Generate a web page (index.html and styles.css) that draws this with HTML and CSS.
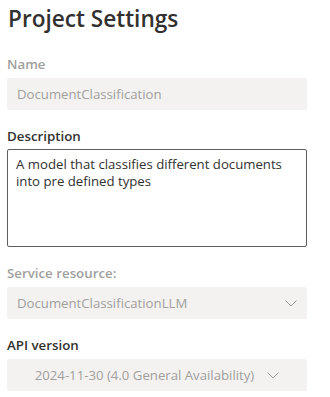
FILE: index.html
```html
<!DOCTYPE html>
<html lang="en">
<head>
<meta charset="utf-8">
<title>Project Settings</title>
<link rel="stylesheet" href="styles.css">
</head>
<body>
<div class="panel">
  <h1 class="title">Project Settings</h1>

  <div class="field">
    <label class="label disabled">Name</label>
    <div class="input disabled-box">DocumentClassification</div>
  </div>

  <div class="field">
    <label class="label label-tight">Description</label>
    <div class="textarea">A model that classifies different documents into pre defined types</div>
  </div>

  <div class="field">
    <label class="label disabled">Service resource:</label>
    <div class="dropdown disabled-box">
      <span class="dropdown-text">DocumentClassificationLLM</span>
      <svg class="chevron" width="12" height="7" viewBox="0 0 12 7"><polyline points="0.5,0.5 6,6 11.5,0.5" fill="none" stroke="#a19f9d" stroke-width="1"/></svg>
    </div>
  </div>

  <div class="field">
    <label class="label">API version</label>
    <div class="dropdown dropdown-center disabled-box">
      <span class="dropdown-text">2024-11-30 (4.0 General Availability)</span>
      <svg class="chevron" width="12" height="7" viewBox="0 0 12 7"><polyline points="0.5,0.5 6,6 11.5,0.5" fill="none" stroke="#a19f9d" stroke-width="1"/></svg>
    </div>
  </div>
</div>
</body>
</html>
```

FILE: styles.css
```css
* { box-sizing: border-box; }

html, body {
  margin: 0;
  padding: 0;
  background: #ffffff;
}

body {
  font-family: "Segoe UI", "Open Sans", "Noto Sans", sans-serif;
  color: #323130;
  font-size: 13.2px;
}

.panel {
  width: 300px;
  margin-left: 7px;
  padding-top: 3px;
  display: flex;
  flex-direction: column;
}

.title {
  margin: 0 0 0 1px;
  font-size: 22.6px;
  font-weight: 600;
  line-height: 32px;
  color: #323130;
}

.field {
  display: flex;
  flex-direction: column;
  margin-top: 16px;
}

.field:first-of-type {
  margin-top: 19px;
}

.label {
  display: block;
  font-size: 13.3px;
  font-weight: 600;
  line-height: 20px;
  margin-bottom: 4px;
  color: #323130;
}

.label-tight {
  margin-bottom: 3px;
}

.label.disabled {
  color: #a19f9d;
}

.disabled-box {
  background: #f3f2f1;
  color: #a19f9d;
  border-radius: 2px;
}

.input {
  height: 32px;
  line-height: 32px;
  padding: 0 10px;
  white-space: nowrap;
}

.textarea {
  height: 98px;
  border: 1px solid #605e5c;
  border-radius: 2px;
  padding: 6px 8px;
  line-height: 17px;
  color: #323130;
}

.dropdown {
  height: 32px;
  display: flex;
  align-items: center;
  justify-content: space-between;
  padding: 0 10px 0 10px;
}

.dropdown-center {
  justify-content: center;
  gap: 13px;
}

.dropdown-text {
  white-space: nowrap;
  line-height: 32px;
}

.chevron {
  display: block;
  flex: none;
}
```
